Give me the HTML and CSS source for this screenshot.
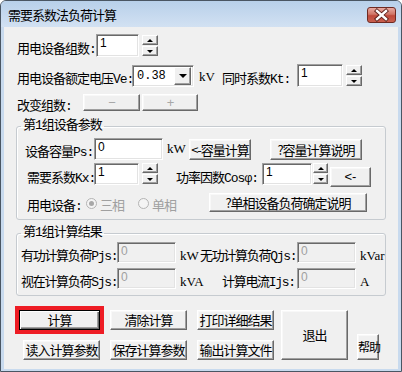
FILE: index.html
```html
<!DOCTYPE html>
<html lang="zh-CN">
<head>
    <meta charset="UTF-8">
    <title>需要系数法负荷计算</title>
    <link rel="stylesheet" href="styles.css">
</head>
<body>

    <div class="window">
        <div class="titlebar">
            <span class="title">需要系数法负荷计算</span>
            <div class="close">
                <svg width="29" height="16" viewBox="0 0 29 16">
                    <path d="M10 4 L19 12 M19 4 L10 12" stroke="#5a1e18" stroke-width="4.2" stroke-linecap="square"/>
                    <path d="M10 4 L19 12 M19 4 L10 12" stroke="#fff" stroke-width="2.4" stroke-linecap="square"/>
                </svg>
            </div>
        </div>

        <div class="client">
            <div class="row row-count">
                <span class="lbl" style="width:79px">用电设备组数:</span>
                <div class="edit count-edit">1</div>
                <div class="spin"><div class="sbtn"><i class="up"></i></div><div class="sbtn"><i class="down"></i></div></div>
            </div>

            <div class="row row-volt">
                <span class="lbl" style="width:115px">用电设备额定电压Ve:</span>
                <div class="combo">
                    <span class="combo-text">0.38</span>
                    <div class="combo-btn"><i class="down big"></i></div>
                </div>
                <span class="unit volt-unit">kV</span>
                <span class="lbl" style="width:75px">同时系数Kt:</span>
                <div class="edit kt-edit">1</div>
                <div class="spin"><div class="sbtn"><i class="up"></i></div><div class="sbtn"><i class="down"></i></div></div>
            </div>

            <div class="row row-change">
                <span class="lbl" style="width:66px">改变组数:</span>
                <button class="btn disabled minus">−</button>
                <button class="btn disabled plus">+</button>
            </div>

            <fieldset class="group group-params">
                <legend>第1组设备参数</legend>

                <div class="row row-ps">
                    <span class="lbl" style="width:69px">设备容量Ps:</span>
                    <div class="edit ps-edit">0</div>
                    <span class="unit" style="width:22px">kW</span>
                    <button class="btn cap-calc">&lt;-容量计算</button>
                    <button class="btn cap-help">?容量计算说明</button>
                </div>

                <div class="row row-kx">
                    <span class="lbl" style="width:67px">需要系数Kx:</span>
                    <div class="edit kx-edit">1</div>
                    <div class="spin"><div class="sbtn"><i class="up"></i></div><div class="sbtn"><i class="down"></i></div></div>
                    <span class="lbl cos-lbl" style="width:86px">功率因数Cosφ:</span>
                    <div class="edit cos-edit">1</div>
                    <div class="spin spin-narrow"><div class="sbtn"><i class="up"></i></div><div class="sbtn"><i class="down"></i></div></div>
                    <button class="btn arrow-btn">&lt;-</button>
                </div>

                <div class="row row-phase">
                    <span class="lbl" style="width:59px">用电设备:</span>
                    <span class="radio checked"></span>
                    <span class="radio-text">三相</span>
                    <span class="radio second"></span>
                    <span class="radio-text">单相</span>
                    <button class="btn phase-help">?单相设备负荷确定说明</button>
                </div>
            </fieldset>

            <fieldset class="group group-result">
                <legend>第1组计算结果</legend>

                <div class="row row-result">
                    <span class="lbl" style="width:96px">有功计算负荷Pjs:</span>
                    <div class="edit result-edit">0</div>
                    <span class="unit low" style="width:20px">kW</span>
                    <span class="lbl" style="width:97px">无功计算负荷Qjs:</span>
                    <div class="edit result-edit">0</div>
                    <span class="unit low">kVar</span>
                </div>

                <div class="row row-result second">
                    <span class="lbl" style="width:96px">视在计算负荷Sjs:</span>
                    <div class="edit result-edit">0</div>
                    <span class="unit low" style="width:42px">kVA</span>
                    <span class="lbl" style="width:75px">计算电流Ijs:</span>
                    <div class="edit result-edit">0</div>
                    <span class="unit low">A</span>
                </div>
            </fieldset>

            <div class="actions">
                <div class="col col-first">
                    <button class="btn act default">计算</button>
                    <button class="btn act narrow">读入计算参数</button>
                </div>
                <div class="col">
                    <button class="btn act">清除计算</button>
                    <button class="btn act">保存计算参数</button>
                </div>
                <div class="col">
                    <button class="btn act">打印详细结果</button>
                    <button class="btn act">输出计算文件</button>
                </div>
                <button class="btn exit">退出</button>
                <button class="btn help">帮助</button>
            </div>
        </div>
    </div>

</body>
</html>
```

FILE: styles.css
```css
body {
    margin: 0;
    font-family: "Noto Sans CJK SC", sans-serif;
    font-size: 13px;
    letter-spacing: -1px;
    color: #000;
}

.window {
    width: 402px;
    height: 372px;
    box-sizing: border-box;
    border: 1px solid #4a5663;
    border-radius: 6px 6px 0 0;
    background: #c8daee;
    padding: 0 3px 2px;
    display: flex;
    flex-direction: column;
}

.titlebar {
    height: 26px;
    display: flex;
    align-items: center;
    justify-content: space-between;
    background: linear-gradient(#b8d0ea, #d2e1f2);
    margin: 0 -3px;
    padding-left: 7px;
    padding-right: 5px;
    border-radius: 5px 5px 0 0;
}

.title {
    font-size: 13px;
    letter-spacing: -1px;
    margin-top: 1px;
}

.close {
    width: 29px;
    height: 16px;
    box-sizing: border-box;
    border: 1px solid #6f2a22;
    border-radius: 3px;
    background: linear-gradient(#e8aaa1, #d07566 45%, #bf4a3b 55%, #c9604f);
    display: flex;
    align-items: center;
    justify-content: center;
    margin-top: 2px;
}

.close svg {
    display: block;
    margin: -1px;
}

.client {
    flex: 1;
    background: #f0f0f0;
    padding: 0 12px;
    display: flex;
    flex-direction: column;
}

.row {
    display: flex;
    align-items: center;
    white-space: nowrap;
}

.lbl {
    flex: none;
    padding-top: 3px;
    font-family: "Liberation Mono", "Noto Sans CJK SC", monospace;
}

.unit {
    flex: none;
    font-family: "Liberation Serif", serif;
    font-size: 13px;
    letter-spacing: 0;
}

.unit.low {
    margin-left: 4px;
    padding-top: 6px;
}

/* sunken edit boxes */
.edit {
    flex: none;
    box-sizing: border-box;
    background: #fff;
    border: 1px solid;
    border-color: #a0a0a0 #fff #fff #a0a0a0;
    box-shadow: inset 1px 1px #696969, inset -1px -1px #e3e3e3;
    font-family: "Liberation Sans", sans-serif;
    font-size: 12px;
    line-height: 14px;
    padding: 1px 3px;
    letter-spacing: 0;
}

.spin {
    flex: none;
    display: flex;
    flex-direction: column;
    gap: 1px;
    margin-left: 3px;
}

.sbtn {
    width: 16px;
    height: 10px;
    box-sizing: border-box;
    background: #f0f0f0;
    border: 1px solid;
    border-color: #fff #696969 #696969 #fff;
    box-shadow: inset -1px -1px #a0a0a0;
    display: flex;
    align-items: center;
    justify-content: center;
}

.spin-narrow {
    margin-left: 1px;
}

.spin-narrow .sbtn {
    width: 15px;
}

.up {
    border-left: 3px solid transparent;
    border-right: 3px solid transparent;
    border-bottom: 3px solid #000;
}

.down {
    border-left: 3px solid transparent;
    border-right: 3px solid transparent;
    border-top: 3px solid #000;
}

.down.big {
    border-left-width: 4px;
    border-right-width: 4px;
    border-top-width: 4px;
}

/* raised push buttons */
.btn {
    flex: none;
    box-sizing: border-box;
    background: #f0f0f0;
    border: 1px solid;
    border-color: #fff #696969 #696969 #fff;
    box-shadow: inset -1px -1px #a0a0a0, inset 1px 1px #f8f8f8;
    font-family: "Noto Sans CJK SC", sans-serif;
    font-size: 13px;
    letter-spacing: -1px;
    color: #000;
    padding: 0;
    line-height: 14px;
    white-space: nowrap;
    overflow: visible;
}

.btn.disabled {
    color: #a8a8a8;
    font-family: "Liberation Sans", sans-serif;
    font-weight: 300;
}

/* first rows */
.row-count {
    margin-top: 7px;
    height: 23px;
    padding-left: 1px;
}

.count-edit {
    width: 43px;
    height: 23px;
}

.row-volt {
    margin-top: 7px;
    height: 23px;
    padding-left: 1px;
}

.combo {
    flex: none;
    width: 62px;
    height: 22px;
    box-sizing: border-box;
    background: #fff;
    border: 1px solid;
    border-color: #a0a0a0 #fff #fff #a0a0a0;
    box-shadow: inset 1px 1px #696969, inset -1px -1px #e3e3e3;
    display: flex;
    align-items: center;
    justify-content: space-between;
    padding: 2px 2px 2px 4px;
}

.combo-text {
    font-family: "Liberation Mono", monospace;
    font-size: 12px;
    letter-spacing: 0;
}

.combo-btn {
    width: 17px;
    height: 18px;
    box-sizing: border-box;
    background: #f0f0f0;
    border: 1px solid;
    border-color: #fff #696969 #696969 #fff;
    box-shadow: inset -1px -1px #a0a0a0;
    display: flex;
    align-items: center;
    justify-content: center;
}

.volt-unit {
    margin-left: 5px;
    width: 23px;
    padding-top: 3px;
}

.kt-edit {
    width: 46px;
    height: 23px;
}

.row-change {
    margin-top: 7px;
    height: 17px;
    padding-left: 1px;
}

.minus {
    width: 57px;
    height: 17px;
}

.plus {
    width: 56px;
    height: 17px;
    margin-left: 2px;
}

/* group boxes */
.group {
    margin: 8px 0 0;
    padding: 4px 0 7px;
    min-width: 0;
    border: 1px solid #c6cbd0;
    border-radius: 3px;
    box-shadow: inset 1px 1px #fff;
}

.group legend {
    margin-left: 4px;
    padding: 0 2px;
    line-height: 14px;
    font-family: "Liberation Mono", "Noto Sans CJK SC", monospace;
}

.row-ps {
    height: 23px;
    padding-left: 8px;
}

.ps-edit {
    width: 69px;
    height: 22px;
}

.row-ps .unit {
    margin-left: 4px;
}

.cap-calc {
    width: 62px;
    height: 21px;
    margin-top: 2px;
}

.cap-help {
    width: 92px;
    height: 21px;
    margin-left: 19px;
    margin-top: 2px;
}

.row-kx {
    margin-top: 3px;
    height: 24px;
    padding-left: 10px;
}

.kx-edit {
    width: 45px;
    height: 22px;
    align-self: flex-start;
}

.row-kx .spin {
    align-self: flex-start;
}

.cos-lbl {
    margin-left: 18px;
}

.cos-edit {
    width: 50px;
    height: 22px;
    align-self: flex-start;
}

.arrow-btn {
    width: 41px;
    height: 20px;
    margin-left: 2px;
    align-self: flex-end;
    font-family: "Liberation Sans", sans-serif;
    letter-spacing: 0;
}

.row-phase {
    margin-top: 6px;
    height: 19px;
    padding-left: 10px;
}

.radio {
    flex: none;
    width: 11px;
    height: 11px;
    box-sizing: border-box;
    border-radius: 50%;
    border: 1px solid #b4b4b4;
    background: #f4f4f4;
    margin-top: 2px;
    display: flex;
    align-items: center;
    justify-content: center;
}

.radio.checked::after {
    content: "";
    width: 5px;
    height: 5px;
    border-radius: 50%;
    background: #a8a8a8;
}

.radio.second {
    margin-left: 14px;
}

.radio-text {
    color: #a0a0a0;
    margin-left: 3px;
    padding-top: 3px;
}

.phase-help {
    width: 158px;
    height: 19px;
    margin-left: 33px;
}

.group-result {
    margin-top: 6px;
    padding: 2px 0 6px;
}

.row-result {
    height: 21px;
    padding-left: 4px;
}

.row-result .lbl {
    letter-spacing: -1.3px;
}

.row-result.second {
    margin-top: 5px;
}

.result-edit {
    width: 59px;
    height: 21px;
    background: #f0f0f0;
    color: #a0a0a0;
}

/* bottom buttons */
.actions {
    display: flex;
    margin-top: 14px;
}

.col {
    display: flex;
    flex-direction: column;
    gap: 10px;
    margin-left: 10px;
}

.col-first {
    width: 84px;
    margin-left: 0;
    align-items: flex-end;
}

.act {
    width: 77px;
    height: 20px;
}

.act.default {
    width: 81px;
    border-color: #000;
    box-shadow: inset 1px 1px #fff, inset -1px -1px #696969, inset -2px -2px #a0a0a0;
    outline: 4px solid #ee1c24;
}

.exit {
    width: 67px;
    height: 50px;
    margin-left: 7px;
}

.help {
    width: 22px;
    height: 26px;
    margin-left: 9px;
    align-self: flex-end;
    font-size: 12px;
    letter-spacing: -1px;
}
```
